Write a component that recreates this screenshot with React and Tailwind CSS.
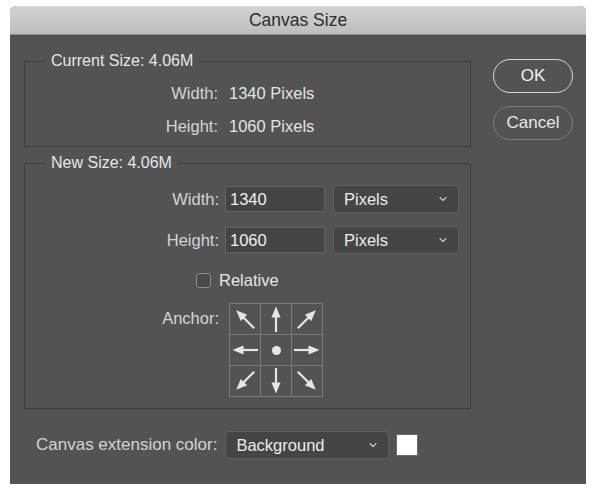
import { ChevronDown } from "lucide-react";

const font = { fontFamily: '"Liberation Sans", Arial, sans-serif' };

function Arrow({ angle }) {
  return (
    <svg width="30" height="30" viewBox="0 0 30 30">
      <g transform={`rotate(${angle} 15 15)`}>
        <line x1="15" y1="28" x2="15" y2="11" stroke="#e6e6e6" strokeWidth="2.2" />
        <polygon points="15,2.5 10.5,13.5 19.5,13.5" fill="#e6e6e6" />
      </g>
    </svg>
  );
}

function Select({ value, width }) {
  return (
    <div
      className={`${width} h-[28px] flex items-center justify-between pl-[10px] pr-[9px] rounded-[4px] border border-[#5e5e5e] bg-[#454545] text-[#ececec]`}
    >
      <span>{value}</span>
      <ChevronDown className="w-[12px] h-[12px] text-[#c8c8c8]" strokeWidth={2.2} />
    </div>
  );
}

export default function App() {
  const anchors = [-45, 0, 45, -90, null, 90, -135, 180, 135];

  return (
    <div className="w-[596px] h-[488px] bg-white pt-[6px] pl-[10px]" style={font}>
      <div className="w-[576px] h-[478px] bg-[#535353] rounded-t-[6px] overflow-hidden text-[16.5px] leading-[18px]">
        <div className="h-[29px] flex items-center justify-center bg-gradient-to-b from-[#d3d3d3] to-[#bdbdbd] border-b border-[#8e8e8e] text-[#2e2e2e] text-[17.5px]">
          Canvas Size
        </div>

        <div className="flex pl-[14px]">
          <div className="w-[447px] pt-[17px]">
            <fieldset className="border border-[#3d3d3d] pt-[6px] pb-[4px] text-[#d4d4d4]">
              <legend className="ml-[20px] px-[6px] text-[#e6e6e6] text-[16px]">Current Size: 4.06M</legend>
              <div className="h-[33px] flex items-center">
                <span className="w-[193px] text-right">Width:</span>
                <span className="ml-[11px] text-[#e4e4e4]">1340 Pixels</span>
              </div>
              <div className="h-[33px] flex items-center">
                <span className="w-[193px] text-right">Height:</span>
                <span className="ml-[11px] text-[#e4e4e4]">1060 Pixels</span>
              </div>
            </fieldset>

            <fieldset className="mt-[7px] border border-[#3d3d3d] pt-[13px] pb-[11px] text-[#d4d4d4]">
              <legend className="ml-[20px] px-[6px] text-[#e6e6e6] text-[16px]">New Size: 4.06M</legend>
              <div className="h-[28px] flex items-center">
                <span className="w-[194px] text-right">Width:</span>
                <div className="ml-[6px] w-[100px] h-[26px] flex items-center px-[4px] bg-[#444444] border border-[#646464] text-[#f0f0f0]">
                  1340
                </div>
                <div className="ml-[8px]">
                  <Select value="Pixels" width="w-[126px]" />
                </div>
              </div>
              <div className="h-[28px] flex items-center mt-[13px]">
                <span className="w-[194px] text-right">Height:</span>
                <div className="ml-[6px] w-[100px] h-[26px] flex items-center px-[4px] bg-[#444444] border border-[#646464] text-[#f0f0f0]">
                  1060
                </div>
                <div className="ml-[8px]">
                  <Select value="Pixels" width="w-[126px]" />
                </div>
              </div>
              <div className="h-[20px] flex items-center mt-[16px] pl-[171px]">
                <div className="w-[15px] h-[15px] rounded-[3px] border border-[#8c8c8c] bg-[#4a4a4a]" />
                <span className="ml-[8px] text-[#e6e6e6]">Relative</span>
              </div>
              <div className="flex mt-[13px]">
                <span className="w-[194px] text-right pt-[6px]">Anchor:</span>
                <div className="ml-[10px] grid grid-cols-[30px_30px_30px] gap-[1px] p-[1px] bg-[#7a7a7a]">
                  {anchors.map((a, i) => (
                    <div key={i} className="w-[30px] h-[30px] flex items-center justify-center bg-[#535353]">
                      {a === null ? (
                        <div className="w-[9px] h-[9px] rounded-full bg-[#e6e6e6]" />
                      ) : (
                        <Arrow angle={a} />
                      )}
                    </div>
                  ))}
                </div>
              </div>
            </fieldset>
          </div>

          <div className="ml-[22px] pt-[24px] flex flex-col gap-[13px]">
            <button className="w-[80px] h-[34px] rounded-full border-[1.5px] border-[#d6d6d6] text-[#f2f2f2] text-[17px]">
              OK
            </button>
            <button className="w-[80px] h-[34px] rounded-full border border-[#7d7d7d] text-[#e8e8e8] text-[17px]">
              Cancel
            </button>
          </div>
        </div>

        <div className="flex items-center mt-[22px] pl-[26px] text-[#d4d4d4]">
          <span className="text-[17px]">Canvas extension color:</span>
          <div className="ml-[8px]">
            <Select value="Background" width="w-[164px]" />
          </div>
          <div className="ml-[7px] w-[22px] h-[22px] bg-white border border-[#6a6a6a]" />
        </div>
      </div>
    </div>
  );
}
